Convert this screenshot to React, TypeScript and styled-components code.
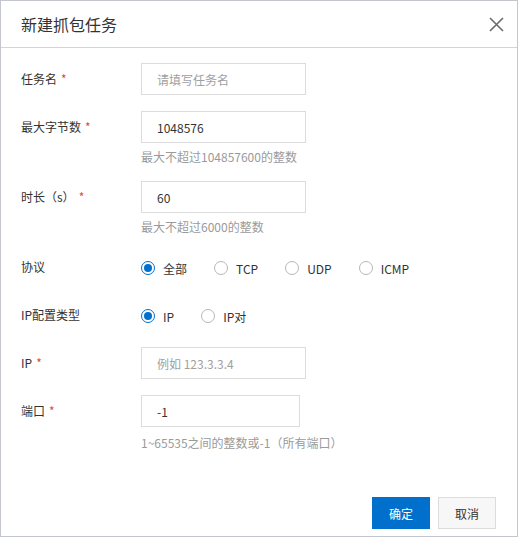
import React from "react";
import styled, { createGlobalStyle } from "styled-components";

const GlobalStyle = createGlobalStyle`
  html, body {
    margin: 0;
    padding: 0;
    background: #fff;
  }
  body {
    font-family: "Noto Sans CJK SC", "Noto Sans", sans-serif;
    font-size: 12px;
    color: #333;
  }
  * { box-sizing: border-box; }
`;

// Dialog shell
const Dialog = styled.div`
  width: 518px;
  height: 537px;
  border: 1px solid #c4c6cf;
  display: flex;
  flex-direction: column;
  background: #fff;
`;

const Header = styled.div`
  height: 47px;
  flex-shrink: 0;
  border-bottom: 1px solid #d4d4d4;
  display: flex;
  align-items: center;
  justify-content: space-between;
  padding: 0 13px 0 20px;
`;

const Title = styled.div`
  font-size: 16px;
  line-height: 20px;
  color: #333;
`;

const CloseButton = styled.button`
  border: none;
  background: none;
  padding: 0;
  width: 15px;
  height: 15px;
  display: flex;
  align-items: center;
  justify-content: center;
  cursor: pointer;
`;

const Body = styled.div`
  flex: 1;
  padding: 15px 20px 0 20px;
`;

const Footer = styled.div`
  display: flex;
  justify-content: flex-end;
  gap: 8px;
  padding: 0 21px 7px 0;
`;

// Form
const Item = styled.div`
  display: flex;
  margin-bottom: 16px;
`;

const Label = styled.div`
  width: 120px;
  flex-shrink: 0;
  line-height: 32px;
  height: 32px;
  color: #333;
  white-space: nowrap;
`;

const Star = styled.span`
  color: #e84738;
  margin-left: 4px;
`;

const Control = styled.div`
  display: flex;
  flex-direction: column;
`;

const Input = styled.input<{ $w?: number }>`
  width: ${(p) => p.$w ?? 165}px;
  height: 32px;
  border: 1px solid #dcdcdc;
  padding: 0 15px;
  font-family: inherit;
  font-size: 12px;
  color: #333;
  outline: none;
  background: #fff;
  &::placeholder {
    color: #a0a0a0;
  }
`;

const Help = styled.div<{ $gap?: number }>`
  margin-top: ${(p) => p.$gap ?? 6}px;
  line-height: 16px;
  color: #9a9a9a;
`;

const RadioGroup = styled.div`
  display: flex;
  align-items: center;
  height: 32px;
  margin: 1px 0 -1px;
`;

const RadioItem = styled.label`
  display: flex;
  align-items: center;
  margin-right: 27px;
  color: #333;
  cursor: pointer;
`;

const RadioCircle = styled.span<{ $checked?: boolean }>`
  width: 14px;
  height: 14px;
  border-radius: 50%;
  border: 1px solid ${(p) => (p.$checked ? "#0070cc" : "#b7b7b7")};
  display: inline-flex;
  align-items: center;
  justify-content: center;
  margin-right: 8px;
  background: #fff;
  &::after {
    content: "";
    width: 8px;
    height: 8px;
    border-radius: 50%;
    background: ${(p) => (p.$checked ? "#0070cc" : "transparent")};
  }
`;

const Button = styled.button<{ $primary?: boolean }>`
  width: 58px;
  height: 32px;
  font-family: inherit;
  font-size: 12px;
  border: 1px solid ${(p) => (p.$primary ? "#0070cc" : "#dcdcdc")};
  background: ${(p) => (p.$primary ? "#0070cc" : "#f7f7f7")};
  color: ${(p) => (p.$primary ? "#fff" : "#333")};
  cursor: pointer;
`;

function Radio({ label, checked }: { label: string; checked?: boolean }) {
  return (
    <RadioItem>
      <RadioCircle $checked={checked} />
      {label}
    </RadioItem>
  );
}

export default function App() {
  return (
    <>
      <GlobalStyle />
      <Dialog>
        <Header>
          <Title>新建抓包任务</Title>
          <CloseButton aria-label="close">
            <svg width="15" height="15" viewBox="0 0 15 15">
              <path d="M1 1 L14 14 M14 1 L1 14" stroke="#6b6b6b" strokeWidth="1.6" fill="none" />
            </svg>
          </CloseButton>
        </Header>

        <Body>
          <Item>
            <Label>
              任务名<Star>*</Star>
            </Label>
            <Control>
              <Input placeholder="请填写任务名" />
            </Control>
          </Item>

          <Item>
            <Label>
              最大字节数<Star>*</Star>
            </Label>
            <Control>
              <Input defaultValue="1048576" />
              <Help>最大不超过104857600的整数</Help>
            </Control>
          </Item>

          <Item>
            <Label>
              时长（s）<Star>*</Star>
            </Label>
            <Control>
              <Input defaultValue="60" />
              <Help>最大不超过6000的整数</Help>
            </Control>
          </Item>

          <Item>
            <Label>协议</Label>
            <RadioGroup>
              <Radio label="全部" checked />
              <Radio label="TCP" />
              <Radio label="UDP" />
              <Radio label="ICMP" />
            </RadioGroup>
          </Item>

          <Item>
            <Label>IP配置类型</Label>
            <RadioGroup>
              <Radio label="IP" checked />
              <Radio label="IP对" />
            </RadioGroup>
          </Item>

          <Item>
            <Label>
              IP<Star>*</Star>
            </Label>
            <Control>
              <Input placeholder="例如 123.3.3.4" />
            </Control>
          </Item>

          <Item>
            <Label>
              端口<Star>*</Star>
            </Label>
            <Control>
              <Input $w={159} defaultValue="-1" />
              <Help $gap={8}>1~65535之间的整数或-1（所有端口）</Help>
            </Control>
          </Item>
        </Body>

        <Footer>
          <Button $primary>确定</Button>
          <Button>取消</Button>
        </Footer>
      </Dialog>
    </>
  );
}
